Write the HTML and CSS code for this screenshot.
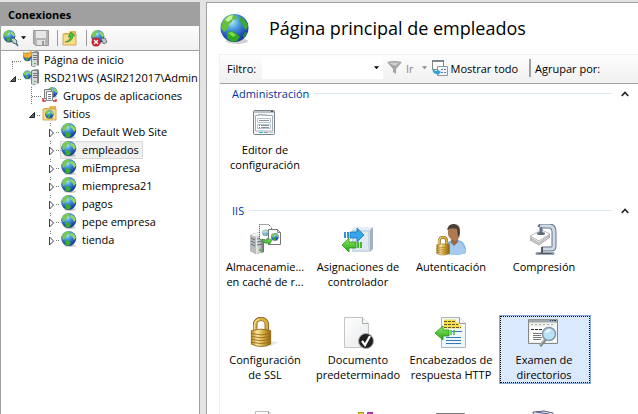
FILE: index.html
```html
<!DOCTYPE html>
<html lang="es">
<head>
<meta charset="utf-8">
<title>Página principal de empleados</title>
<link rel="stylesheet" href="styles.css">
</head>
<body>
<svg class="defs" aria-hidden="true">
  <defs>
    <radialGradient id="sea" cx="40%" cy="28%" r="75%">
      <stop offset="0" stop-color="#b4ecfa"/><stop offset=".35" stop-color="#4a9fdf"/><stop offset=".75" stop-color="#2350b4"/><stop offset="1" stop-color="#183a8c"/>
    </radialGradient>
    <linearGradient id="gold" x2="1"><stop offset="0" stop-color="#b88a20"/><stop offset=".3" stop-color="#fbe8a4"/><stop offset=".6" stop-color="#d8b048"/><stop offset="1" stop-color="#94660c"/></linearGradient>
    <linearGradient id="steel" x2="1"><stop offset="0" stop-color="#eceeee"/><stop offset=".5" stop-color="#bcc0c0"/><stop offset="1" stop-color="#606668"/></linearGradient>
    <linearGradient id="paper" x2="1" y2="1"><stop offset="0" stop-color="#ffffff"/><stop offset="1" stop-color="#e6e8ea"/></linearGradient>
    <linearGradient id="green" y2="1" x2="0"><stop offset="0" stop-color="#8cf060"/><stop offset="1" stop-color="#28a018"/></linearGradient>
    <symbol id="globe" viewBox="0 0 30 30">
      <ellipse cx="17" cy="27" rx="11" ry="3" fill="#777" opacity=".35"/>
      <circle cx="14.500" cy="14" r="14" fill="url(#sea)"/>
      <path d="M2 9C5 3 10 0 14 1l3 2-1 3-3-1-1 3-3 2-1 5-4 3-3-4z" fill="#64c03c"/>
      <path d="M5 6l4-4 4-1-1 4-4 3z" fill="#c8f0a0"/>
      <path d="M20 3c4 1 7 5 8 9l-2 4-3-3-1-4-3-2z" fill="#3caa30"/>
      <path d="M7 18l5-1 5 3 3 3-3 4-5 1-5-4z" fill="#30a820"/>
      <path d="M8 19l4-1 4 3-3 2z" fill="#80dc48"/>
      <path d="M25 18l2 1-3 5-1-2z" fill="#289828"/>
    </symbol>
    <symbol id="small-globe" viewBox="0 0 16 16">
      <ellipse cx="9" cy="14.500" rx="6" ry="1.500" fill="#777" opacity=".4"/>
      <circle cx="7.700" cy="7.500" r="7.500" fill="url(#sea)"/>
      <path d="M1 5c1-3 4-5 7-4.500L8 3 6 4 5 7 2 9z" fill="#7cc850"/>
      <path d="M10 1.500c3 1 4.500 3 5 5L13 9l-1.500-3L9 4z" fill="#8fd468"/>
      <path d="M4 9.500l3-.5 3 3-2 2.500-3-.5z" fill="#38b028"/>
    </symbol>
    <symbol id="lock" viewBox="0 0 22 32">
      <path d="M5 15V8a6 6 0 0 1 12 0v7" fill="none" stroke="#765410" stroke-width="4.500"/>
      <path d="M5 15V8a6 6 0 0 1 12 0v7" fill="none" stroke="#dcb040" stroke-width="3"/>
      <path d="M4 14V8a7 7 0 0 1 5-6" fill="none" stroke="#fff0ac"/>
      <path d="M1 14q10-3 20 0v14q-10 5-20 0z" fill="url(#gold)" stroke="#8a6010" stroke-width=".8"/>
      <path d="M1 17q10 3 20 0M1 20q10 3 20 0M1 23q10 3 20 0M1 26q10 3 20 0" fill="none" stroke="#966a14" stroke-width=".9"/>
    </symbol>
    <symbol id="tower" viewBox="0 0 16 24">
      <path d="M1 4l9-3 5 2v18l-8 2-6-3z" fill="#75797b"/>
      <path d="M1 4l6 2v17l-6-3z" fill="#b8bcbe"/>
      <path d="M7 6l8-3v18l-8 2z" fill="url(#steel)"/>
      <path d="M1 4l9-3 5 2-8 3z" fill="#f1f2f2"/>
      <path d="M2 7l4 2M2 10l4 2M2 13l4 2M8 8l5-1M8 11l5-1M8 14l5-1" stroke="#60686a"/>
      <path d="M10 19h3" stroke="#50c830" stroke-width="2"/>
    </symbol>
    <symbol id="server" viewBox="0 0 16 16">
      <path d="M9 1l5-1 2 1v13l-5 2-3-1V2z" fill="#818789"/>
      <path d="M9 2h5v13H9z" fill="#d5d8da"/>
      <path d="M10 4.500h4M10 6.500h4M10 8.500h4" stroke="#72787a"/>
      <path d="M11 12.500h2" stroke="#4cc030"/>
      <svg y="1" width="9" height="10"><use href="#small-globe"/></svg>
    </symbol>
    <symbol id="folder" viewBox="0 0 16 16">
      <path d="M2 3h5l1-2h6v13H2z" fill="#e3b852"/>
      <path d="M1 4h13v11H1z" fill="#f8dc8c" stroke="#c99b35" stroke-width=".8"/>
    </symbol>
    <symbol id="shut" viewBox="0 0 18 18">
      <path d="M8.500 0v4M14 9.500h4" stroke="#777" stroke-dasharray="1 1"/>
      <path d="M7.500 6v8l4-4z" fill="#fff" stroke="#444"/>
    </symbol>
    <symbol id="open" viewBox="0 0 18 18">
      <path d="M14 10.500h4" stroke="#777" stroke-dasharray="1 1"/>
      <path d="M11.500 7.500v5h-5z" fill="#666" stroke="#222"/>
    </symbol>
    <symbol id="down" viewBox="0 0 6 4"><path d="M0 0h6L3 3.500z" fill="currentColor"/></symbol>
    <symbol id="up" viewBox="0 0 8 6"><path d="M.7 5L4 1.500 7.300 5" fill="none" stroke="#222" stroke-width="1.600"/></symbol>
  </defs>
</svg>

<div class="window">
  <aside class="connections">
    <h2 class="panel-title">Conexiones</h2>
    <div class="tools">
      <button class="tool">
        <svg width="16" height="17" viewBox="0 0 16 17"><svg width="13" height="13"><use href="#small-globe"/></svg><path d="M8 9l3-1 3 3-1 3-3-1z" fill="#c4d2d6" stroke="#57717a"/><path d="M13 13l2 3" stroke="#477078" stroke-width="1.500"/></svg>
        <svg class="caret" width="5" height="4"><use href="#down"/></svg>
      </button>
      <button class="tool save" disabled>
        <svg width="16" height="16" viewBox="0 0 16 16"><path d="M.5.5h15v15h-13l-2-2z" fill="#b4b4b4" stroke="#999"/><path d="M3 1h10v7H3z" fill="#e8e8e8"/><path d="M4 10h8v5H4z" fill="#e2e2e2"/><path d="M9 11h2v4H9z" fill="#999"/></svg>
      </button>
      <span class="bar"></span>
      <button class="tool">
        <svg width="16" height="16" viewBox="0 0 16 16"><use href="#folder"/><path d="M3 12c4-1 5-3 5-6L6 7l3-5 4 4-2-.5c0 4-3 7-8 6.500z" fill="#48c038" stroke="#278a20" stroke-width=".6"/></svg>
      </button>
      <span class="bar"></span>
      <button class="tool">
        <svg width="17" height="17" viewBox="0 0 17 17"><svg width="14" height="14"><use href="#small-globe"/></svg><path d="M10 9l4-1 2 4-3 2z" fill="#bdcace" stroke="#69797e"/><circle cx="5" cy="12" r="4.500" fill="#ce2028"/><path d="M3 10l4 4M7 10l-4 4" stroke="#fff" stroke-width="1.400"/></svg>
      </button>
    </div>
    <ul class="tree">
      <li>
        <div class="row"><svg class="twist" viewBox="0 0 18 18"><path d="M8 10.500h10M8.500 11v7" stroke="#777" stroke-dasharray="1 1"/></svg><a class="node" href="#"><svg width="16" height="16"><use href="#server"/><path d="M0 1l4 2 4-3 1 4-3 3-5-1z" fill="#f6b034" stroke="#d88a20" stroke-width=".6"/></svg>Página de inicio</a></div>
      </li>
      <li>
        <div class="row"><svg class="twist"><use href="#open"/></svg><a class="node" href="#"><svg width="16" height="16"><use href="#server"/></svg>RSD21WS (ASIR212017\Admin</a></div>
        <ul>
          <li><div class="row"><svg class="twist" viewBox="0 0 18 18"><path d="M8.500 0v18M9 9.500h9" stroke="#777" stroke-dasharray="1 1"/></svg><a class="node" href="#"><svg width="16" height="16" viewBox="0 0 16 16"><svg x="5" width="11" height="11"><use href="#small-globe"/></svg><path d="M2.500 2.500h7v9h-7z" fill="#eee" stroke="#777"/><path d="M4.500 4.500h6v9h-6z" fill="#fff" stroke="#888"/><path d="M6 7.500h3M6 9.500h3M6 11.500h3" stroke="#778"/><path d="M1 11v3h3M14 12v2h-3" fill="none" stroke="#d03838" stroke-width="1.500"/></svg>Grupos de aplicaciones</a></div></li>
          <li>
            <div class="row"><svg class="twist"><use href="#open"/></svg><a class="node" href="#"><svg width="16" height="16" viewBox="0 0 16 16"><use href="#folder"/><svg x="3" y="5" width="9" height="9"><use href="#small-globe"/></svg></svg>Sitios</a></div>
            <ul>
              <li><div class="row"><svg class="twist"><use href="#shut"/></svg><a class="node" href="#"><svg width="16" height="16"><use href="#small-globe"/></svg>Default Web Site</a></div></li>
              <li><div class="row"><svg class="twist"><use href="#shut"/></svg><a class="node current" href="#"><svg width="16" height="16"><use href="#small-globe"/></svg>empleados</a></div></li>
              <li><div class="row"><svg class="twist"><use href="#shut"/></svg><a class="node" href="#"><svg width="16" height="16"><use href="#small-globe"/></svg>miEmpresa</a></div></li>
              <li><div class="row"><svg class="twist"><use href="#shut"/></svg><a class="node" href="#"><svg width="16" height="16"><use href="#small-globe"/></svg>miempresa21</a></div></li>
              <li><div class="row"><svg class="twist"><use href="#shut"/></svg><a class="node" href="#"><svg width="16" height="16"><use href="#small-globe"/></svg>pagos</a></div></li>
              <li><div class="row"><svg class="twist"><use href="#shut"/></svg><a class="node" href="#"><svg width="16" height="16"><use href="#small-globe"/></svg>pepe empresa</a></div></li>
              <li><div class="row"><svg class="twist"><use href="#shut"/></svg><a class="node" href="#"><svg width="16" height="16"><use href="#small-globe"/></svg>tienda</a></div></li>
            </ul>
          </li>
        </ul>
      </li>
    </ul>
  </aside>

  <main class="page">
    <header class="page-head">
      <svg width="30" height="30"><use href="#globe"/></svg>
      <h1>Página principal de empleados</h1>
    </header>
    <div class="view">
      <div class="filter">
        <label for="filter">Filtro:</label>
        <span class="combo"><input id="filter" type="text"><button class="drop"><svg width="5" height="4"><use href="#down"/></svg></button></span>
        <button class="go" disabled>
          <svg width="15" height="14" viewBox="0 0 15 14"><path d="M0 1q7-2 15 0L9 8v5l-3-2V8z" fill="#a4a4a4"/><path d="M2 2q5-1 10 0L8 5z" fill="#d0d0d0"/></svg>Ir<svg class="caret" width="5" height="4"><use href="#down"/></svg>
        </button>
        <button class="all">
          <svg width="16" height="16" viewBox="0 0 16 16"><path d="M.5.5h11v9H.500z" fill="#fff" stroke="#888"/><path d="M0 1h12" stroke="#7d8790" stroke-width="2"/><path d="M5.500 6.500h10v9h-10z" fill="#f4f6fa" stroke="#8c98a4"/><path d="M9 9.500h2M12 9.500h2M9 12.500h2M12 12.500h2" stroke="#667cae"/><path d="M1 7c0 3 2 4 4 4V9l4 3-4 4v-2c-4 0-5-3-4-7z" fill="#2ca2dc"/></svg>Mostrar todo
        </button>
        <span class="split"></span>
        <span class="group">Agrupar por:</span>
      </div>

      <section>
        <div class="section-head"><h2>Administración</h2><span class="rule"></span><button class="fold"><svg width="8" height="6"><use href="#up"/></svg></button></div>
        <ul class="features">
          <li><button class="feature">
            <svg viewBox="0 0 32 32"><rect x="4.500" y="3.500" width="21" height="24" rx="1" fill="#f2f3f4" stroke="#7d8084"/><path d="M5 5h20" stroke="#b9c0c4" stroke-width="2"/><path d="M22 4.500h2" stroke="#345"/><path d="M6.500 24V8.500h3v-1h4v1h10V24z" fill="#fff" stroke="#a3aebb"/><path d="M10 8h8" stroke="#a9b2bf"/><path d="M8.500 11.500h13v4h-13zM8.500 17.500h13v4h-13z" fill="#fff" stroke="#b4c5d0"/><path d="M10 13.500h10M12 18.500h8M12 20.500h8" stroke="#8c9098"/><path d="M10 18.500h1M10 20.500h1" stroke="#18a8c8"/><path d="M10 25.500h4" stroke="#20c4e4"/><path d="M15 25.500h4" stroke="#999"/><path d="M20 25.500h4" stroke="#ccc"/></svg>
            <span>Editor de configuración</span></button></li>
        </ul>
      </section>

      <section>
        <div class="section-head"><h2>IIS</h2><span class="rule"></span><button class="fold"><svg width="8" height="6"><use href="#up"/></svg></button></div>
        <ul class="features">
          <li><button class="feature">
            <svg viewBox="0 0 32 32"><svg y="7" width="16" height="24"><use href="#tower"/></svg><path d="M10.500.5h9l3 3v12h-12z" fill="#fff" stroke="#444" stroke-dasharray="1 1"/><svg x="13" y="5" width="7" height="8" opacity=".6"><use href="#small-globe"/></svg><path d="M19.500 5.500h9l3 3v12h-12z" fill="#fff" stroke="#777"/><path d="M28.500 5.500v3h3" fill="none" stroke="#888"/><svg x="22" y="9" width="8" height="8"><use href="#small-globe"/></svg><path d="M13 15q3 3 6 1l-1-2 5 2-3 5-1-2q-5 1-6-4z" fill="url(#green)" stroke="#289028" stroke-width=".7"/></svg>
            <span>Almacenamie...<br>en caché de r...</span></button></li>
          <li><button class="feature">
            <svg viewBox="0 0 32 32"><path d="M10 6l3-3h18v22l-3 3H10z" fill="#a4b2c2"/><path d="M10 6l3-3h18l-3 3z" fill="#e4edf5"/><path d="M10 6h18v22H10z" fill="#ccd8e4"/><path d="M12 8h14v18H12z" fill="#e0e8f0"/><path d="M8 8h7V4l7 7-7 7v-4H8z" fill="#36a6ec" stroke="#1772b4" stroke-width=".8"/><path d="M3 8v6M6 8v6" stroke="#3590cc" stroke-width="2"/><path d="M14 18H7v-4l-7 7 7 7v-4h7z" fill="url(#green)" stroke="#289020" stroke-width=".8"/><path d="M16 18v6M19 18v6" stroke="#43ba30" stroke-width="2"/></svg>
            <span>Asignaciones de controlador</span></button></li>
          <li><button class="feature">
            <svg viewBox="0 0 32 32"><path d="M10 30q0-13 8-14h5q8 1 8 13-6 3-21 1z" fill="#78aee0"/><path d="M15 19l4 3 4-5 5 3 3 9q-5 2-16 1z" fill="#a5ccee"/><path d="M16 14h7v4l-4 4-3-4z" fill="#996844"/><path d="M13 6q0-6 6-6t6 6v5q-1 5-5 6-5-1-7-6z" fill="#ac7950"/><path d="M12 6q1-6 7-6 6 1 6 9l-2 4-1-8q-5-2-10 1z" fill="#45403c"/><svg x="1" y="12" width="14" height="20"><use href="#lock"/></svg></svg>
            <span>Autenticación</span></button></li>
          <li><button class="feature">
            <svg viewBox="0 0 32 32"><path d="M12 3q0-1 2-1h7q5 0 5 6v14q0 3-3 3h-9" fill="none" stroke="#66758a" stroke-width="5"/><path d="M12 2h9q5 0 5 6v14q0 3-3 3h-9" fill="none" stroke="#d0dae6" stroke-width="3"/><path d="M2 16l12-7 8 4-11 8z" fill="#ddd" stroke="#777" stroke-width=".6"/><path d="M2 14l12-7 8 4-11 8z" fill="#eee" stroke="#888" stroke-width=".6"/><path d="M2 12l12-6 8 4-11 7z" fill="#fff" stroke="#888" stroke-width=".6"/><path d="M13 3v6" stroke="#66758a" stroke-width="3"/><ellipse cx="13" cy="9.500" rx="4" ry="1.500" fill="#58677a"/><path d="M14 23v6M9 29.500h16" stroke="#4e5867" stroke-width="2"/><circle cx="9" cy="29.500" r="1.500" fill="#8b97a7"/><circle cx="25" cy="29.500" r="1.500" fill="#8b97a7"/></svg>
            <span>Compresión</span></button></li>
          <li><button class="feature">
            <svg viewBox="0 0 32 32"><path d="M18 24l12 1-8 4-8 1z" fill="#ddd" opacity=".7"/><svg x="1" width="22" height="31"><use href="#lock"/></svg></svg>
            <span>Configuración<br>de SSL</span></button></li>
          <li><button class="feature">
            <svg viewBox="0 0 32 32"><path d="M2.500.5h18l6 6v24h-24z" fill="url(#paper)" stroke="#c2c4c6"/><path d="M20.500.5v6h6" fill="#f8f8f8" stroke="#aaa"/><circle cx="24" cy="24" r="7.500" fill="#202020" stroke="#aaa"/><path d="M20 24l3 4 5-9" fill="none" stroke="#fff" stroke-width="2.200"/></svg>
            <span>Documento predeterminado</span></button></li>
          <li><button class="feature">
            <svg viewBox="0 0 32 32"><path d="M6.500.5h18l6 6v24h-24z" fill="#eef8fc" stroke="#a9b4b8"/><path d="M24.500.5v6h6" fill="#fff" stroke="#999"/><path d="M9 4h12M9 7h15M9 10h17" stroke="#f4dc4c" stroke-width="3"/><path d="M9 4.500h12M9 7.500h14M9 10.500h17" stroke="#675b22" stroke-dasharray="3 1"/><path d="M17 14.500h10M11 20.500h15M11 23.500h15M11 26.500h15" stroke="#3778b8"/><path d="M14 13H8V9l-8 7 8 7v-4h6z" fill="url(#green)" stroke="#258d20" stroke-width=".8"/><path d="M16 13v5M19 13v5" stroke="#46bd30" stroke-width="1.500"/></svg>
            <span>Encabezados de respuesta HTTP</span></button></li>
          <li><button class="feature selected">
            <svg viewBox="0 0 32 32"><path d="M.5 2.500h29v24H.500z" fill="#f1f1ee" stroke="#85888b"/><path d="M1 4h28" stroke="#9ea5a9" stroke-width="3"/><path d="M22 3.500h1M24 3.500h1M26 3.500h2" stroke="#246"/><path d="M3 7.500h22" stroke="#aaa" stroke-dasharray="2 2"/><path d="M2 10h26v15H2z" fill="#fff"/><path d="M3 12.500h12" stroke="#222" stroke-dasharray="3 1"/><path d="M5 16.500h9M5 18.500h8M5 20.500h9M5 22.500h8" stroke="#777"/><path d="M18 22l-6 7" stroke="#808588" stroke-width="3"/><path d="M17 22l-6 7" stroke="#c8cbcd"/><circle cx="21" cy="17" r="6.500" fill="#b8e2f8" stroke="#8496a8" stroke-width="1.500"/><path d="M17 16q1-4 6-4-1 4-6 4" fill="#effaff"/><path d="M27 5h1" stroke="#8c3" stroke-width="2"/></svg>
            <span>Examen de directorios</span></button></li>
          <li><div class="feature"><svg viewBox="0 0 32 32"><path d="M6.500 1.500h13l6 6v22h-19z" fill="url(#paper)" stroke="#b8babc"/><path d="M19.500 1.500v6h6" fill="none" stroke="#aaa"/></svg></div></li>
          <li><div class="feature"><svg viewBox="0 0 32 32"><path d="M16.500 2.500h5v7h-5z" fill="#f4d44c" stroke="#b08c18"/><path d="M25.500 2.500h5v7h-5z" fill="#c048c0" stroke="#902890"/></svg></div></li>
          <li><div class="feature"><svg viewBox="0 0 32 32"><path d="M1.500 3.500h28v22h-28z" fill="#d5d8da" stroke="#777"/></svg></div></li>
          <li><div class="feature"><svg viewBox="0 0 32 32"><path d="M5 2l11-1 9 2-2 16-15-3z" fill="#dfe3f1" stroke="#596083"/><path d="M8 2l13 2" stroke="#596083"/></svg></div></li>
        </ul>
      </section>
    </div>
  </main>
</div>
</body>
</html>
```
FILE: styles.css
```css
* { box-sizing: border-box; }

body {
  margin: 0;
  background: #e3e3e3;
  color: #000;
  font: 11px/15px "Open Sans", "Noto Sans", sans-serif;
}

h1, h2 { margin: 0; font-weight: 400; }
ul { list-style: none; margin: 0; padding: 0; }
svg { display: block; flex: none; }
button {
  margin: 0;
  padding: 0;
  border: 0;
  background: none;
  color: inherit;
  font: inherit;
}

.defs { position: absolute; width: 0; height: 0; }

.window {
  display: grid;
  grid-template-columns: 200px minmax(0, 1fr);
  gap: 6px;
  height: 100vh;
  padding-top: 2px;
  overflow: hidden;
}

/* Connections panel */
.connections {
  min-width: 0;
  overflow: hidden;
  background: #fff;
  border: solid #a0a0a0;
  border-width: 0 1px;
}
.panel-title {
  height: 24px;
  padding-left: 7px;
  background: #a0a0a0;
  font-size: 11px;
  font-weight: 700;
  line-height: 25px;
}
.tools {
  display: flex;
  align-items: center;
  height: 25px;
  padding-left: 2px;
  border-bottom: 1px solid #a0a0a0;
  background: linear-gradient(#fdfdfd, #f0f0f0);
}
.tool { display: flex; align-items: center; gap: 2px; }
.save { margin-left: 7px; }
.bar { width: 1px; height: 16px; margin: 0 4px 0 8px; background: #999; }

.tree ul { padding-left: 19px; }
.row {
  display: flex;
  align-items: center;
  height: 18px;
  padding-left: 3px;
}
.twist { width: 18px; height: 18px; }
.node {
  display: flex;
  align-items: center;
  gap: 5px;
  height: 18px;
  padding: 0 3px 2px 0;
  border: 1px solid transparent;
  color: inherit;
  text-decoration: none;
  white-space: nowrap;
}
.node.current { background: #f0f0f0; border-color: #d9d9d9; }

/* Feature page */
.page {
  display: flex;
  flex-direction: column;
  min-width: 0;
  overflow: hidden;
  padding-left: 12px;
  border: solid #a0a0a0;
  border-width: 1px 0 0 1px;
  background: #fff;
}
.page-head {
  display: flex;
  flex: none;
  align-items: center;
  gap: 19px;
  height: 51px;
  padding-left: 1px;
}
.page-head h1 { padding-bottom: 2px; font-size: 18px; line-height: 24px; }
.view {
  flex: 1;
  min-height: 0;
  overflow: hidden;
  border: solid #f0f0f0;
  border-width: 1px 0 0 1px;
}
.filter {
  display: flex;
  align-items: center;
  height: 29px;
  padding: 0 0 2px 7px;
  border-bottom: 1px solid #a0a0a0;
  background: linear-gradient(#fdfdfd, #f0f0f0);
  white-space: nowrap;
}
.filter label { flex: none; width: 35px; }
.combo { display: flex; width: 121px; height: 22px; background: #fff; }
.combo input {
  flex: 1;
  min-width: 0;
  border: 0;
  padding: 0 4px;
  background: none;
  font: inherit;
}
.drop { display: flex; align-items: center; justify-content: center; width: 14px; }
.go { display: flex; align-items: center; gap: 4px; margin-left: 4px; color: #888; }
.go .caret { margin-left: 4px; }
.all { display: flex; align-items: center; gap: 3px; margin-left: 5px; }
.split { width: 2px; height: 18px; margin: 0 4px 0 11px; background: #a0a0a0; }

.section-head {
  display: flex;
  align-items: center;
  gap: 5px;
  height: 19px;
  margin-bottom: 2px;
  padding: 0 8px 0 12px;
}
.section-head h2 { color: #039; font-size: 11px; }
.rule { flex: 1; height: 1px; background: #dbe7f5; }
.fold { display: flex; justify-content: center; width: 10px; }
.section-head .fold { margin-left: 3px; }

.features {
  display: grid;
  grid-template-columns: repeat(auto-fill, 92px);
  gap: 24px 1px;
  margin-bottom: 27px;
}
.feature {
  display: flex;
  flex-direction: column;
  align-items: center;
  gap: 3px;
  width: 92px;
  height: 69px;
  padding: 1px 2px 0 0;
  border: 1px solid transparent;
  text-align: center;
}
.feature > svg { width: 32px; height: 32px; }
.feature.selected {
  border-color: #84acdd;
  outline: 1px dotted #000;
  outline-offset: -2px;
  background: #dbe9fd;
}
```
